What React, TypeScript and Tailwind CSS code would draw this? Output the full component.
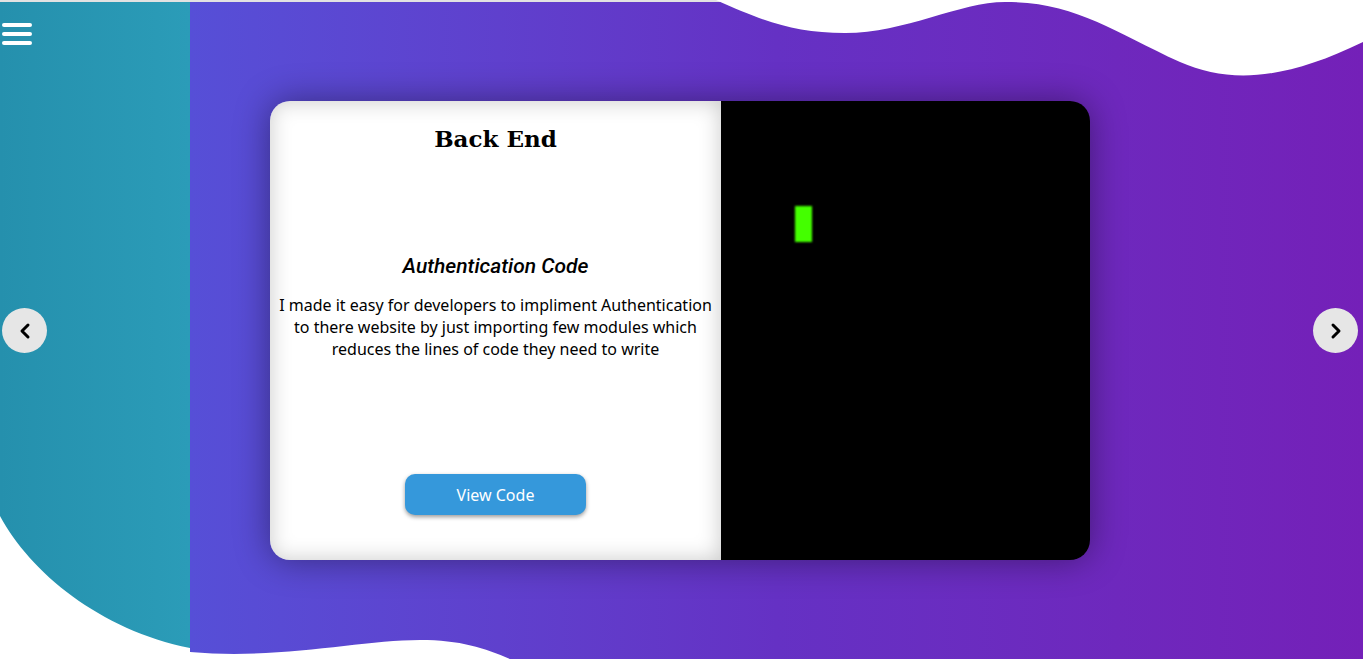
import React from "react";
import { ChevronLeft, ChevronRight } from "lucide-react";

const App: React.FC = () => {
  return (
    <div className="relative h-[659px] w-full overflow-hidden bg-white font-['Noto_Sans',sans-serif]">
      <div className="flex h-full border-t-2 border-[#e2e2e2]">
        <aside className="w-[190px] bg-linear-to-r from-[#2590ad] to-[#2b9cb8]">
          <button className="ml-[2px] mt-[21px] flex w-[30px] flex-col gap-[5px]">
            <span className="h-[4px] w-full rounded-sm bg-white"></span>
            <span className="h-[4px] w-full rounded-sm bg-white"></span>
            <span className="h-[4px] w-full rounded-sm bg-white"></span>
          </button>
        </aside>
        <main className="flex-1 bg-linear-to-r from-[#564fd7] via-[#6531c4] to-[#7420b8]"></main>
      </div>

      {/* white waves */}
      <svg className="pointer-events-none absolute inset-0" width="1363" height="659" viewBox="0 0 1363 659">
        <path d="M716 0 C765 22 795 33 845 33 C905 33 960 2 1005 2 C1075 2 1110 30 1180 62 C1230 84 1285 80 1363 42 L1363 0 Z" fill="#fff" />
        <path d="M0 516 C30 572 100 630 190 648 L190 659 L0 659 Z" fill="#fff" />
        <path d="M190 652 C280 660 360 640 420 640 C460 640 485 648 510 659 L190 659 Z" fill="#fff" />
      </svg>

      <div className="absolute inset-x-0 bottom-0 top-[2px] flex items-center justify-between pl-[2px] pr-[5px]">
        <button className="flex h-[45px] w-[45px] items-center justify-center rounded-full bg-[#e6e6e6]">
          <ChevronLeft size={24} strokeWidth={3} color="#000" />
        </button>

        <div className="flex h-[459px] w-[820px] overflow-hidden rounded-[20px] shadow-[0_0_35px_rgba(0,0,0,0.4)]">
          <div className="flex w-[451px] flex-col items-center bg-white px-2 text-center shadow-[inset_0_0_22px_rgba(0,0,0,0.22)]">
            <h1 className="mt-[16px] font-['DejaVu_Serif',serif] text-[23px] font-bold leading-[44px] text-black">Back End</h1>
            <h2 className="mt-[91px] font-['Roboto',sans-serif] text-[21px] font-medium italic leading-[28px] text-black">
              Authentication Code
            </h2>
            <p className="mt-[14px] text-[16px] leading-[22px] text-black">
              I made it easy for developers to impliment Authentication to there website by just importing few modules which reduces the lines of code they need to write
            </p>
            <button className="mt-[114px] h-[41px] w-[181px] rounded-[10px] bg-[#3598db] text-[16px] text-white shadow-[0_2px_4px_rgba(0,0,0,0.4)]">
              View Code
            </button>
          </div>
          <div className="flex-1 bg-black pl-[74px] pt-[105px]">
            <div className="h-[36px] w-[17px] bg-[#44ff00] blur-[1px]"></div>
          </div>
        </div>

        <button className="flex h-[45px] w-[45px] items-center justify-center rounded-full bg-[#e6e6e6]">
          <ChevronRight size={24} strokeWidth={3} color="#000" />
        </button>
      </div>
    </div>
  );
};

export default App;
